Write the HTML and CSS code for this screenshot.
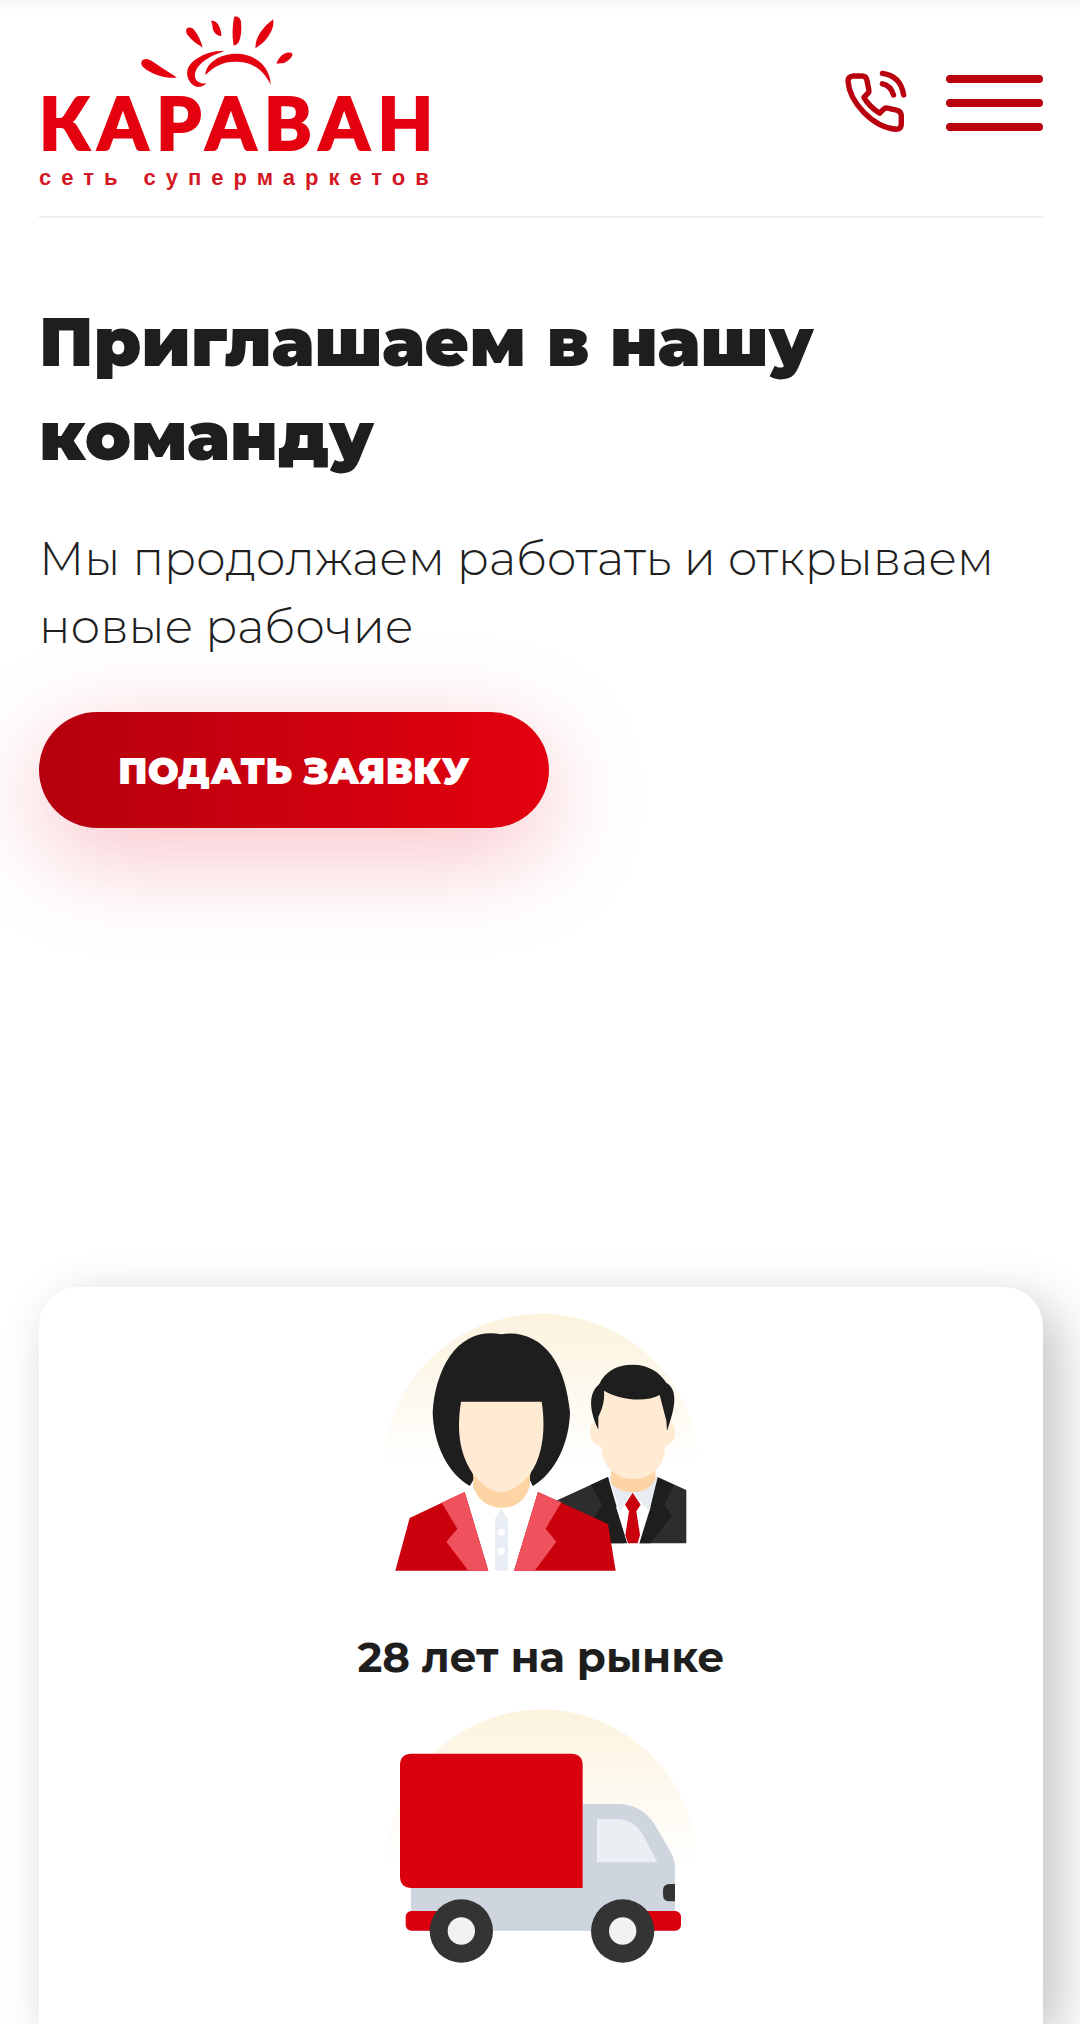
FILE: index.html
```html
<!DOCTYPE html>
<html lang="ru">
<head>
<meta charset="utf-8">
<meta name="viewport" content="width=device-width, initial-scale=1">
<title>Караван — сеть супермаркетов</title>
<link rel="stylesheet" href="styles.css">
</head>
<body>
<header class="header">
  <a class="logo" href="#" aria-label="Караван, сеть супермаркетов">
    <svg class="logo-sun" viewBox="350 35 480 235" aria-hidden="true">
      <path d="M362 187C366 173 383 175 396 184L425 204C440 215 458 223 469 233C447 234 422 231 398 220C379 211 359 199 362 187Z"/>
      <path d="M497 92C496 80 513 79 520 88C533 103 542 124 547 142C532 133 513 120 505 108C500 102 497 98 497 92Z"/>
      <path d="M572 62C580 60 591 67 595 75C600 86 604 98 603 107C593 108 583 100 579 91C575 82 578 72 572 62Z"/>
      <path d="M642 49C651 46 660 52 662 63C665 85 662 113 656 125C652 132 646 136 640 136C635 106 636 75 642 49Z"/>
      <path d="M759 57C763 78 753 98 740 115C729 129 716 137 706 144C705 121 716 101 731 83C740 72 750 65 759 57Z"/>
      <path d="M769 191C775 175 785 162 800 158C811 155 820 158 817 166C813 176 802 183 795 187C786 191 777 188 769 191Z"/>
      <path d="M612 153C575 148 526 169 507 196C493 216 501 245 521 257C535 265 552 259 557 250C545 252 529 246 525 235C515 202 560 168 612 153Z"/>
      <path d="M555 225C556 189 598 161 648 161C709 161 750 203 752 254C730 211 700 187 652 185C610 183 584 197 555 225Z"/>
    </svg>
    <span class="logo-name">КАРАВАН</span>
    <span class="logo-tagline">сеть супермаркетов</span>
  </a>
  <div class="actions">
    <a class="phone" href="tel:" aria-label="Позвонить">
      <svg viewBox="76 60 184 184" aria-hidden="true">
        <path d="M99 78H127Q138 78 141 90L147 120Q148 125 144 129L132 141Q149 170 179 188L190 177Q195 172 202 173L229 179Q242 182 243 194V222Q242 236 228 236C158 230 89 155 85 93Q85 79 99 78Z"/>
        <path d="M187 101Q212 106 220 134M187 70Q241 77 250 134"/>
      </svg>
    </a>
    <button class="menu" type="button" aria-label="Меню"><span></span><span></span><span></span></button>
  </div>
</header>
<main class="main">
  <section class="hero">
    <h1 class="title">Приглашаем в нашу команду</h1>
    <p class="lead">Мы продолжаем работать и открываем новые рабочие</p>
    <button class="apply" type="button">ПОДАТЬ ЗАЯВКУ</button>
  </section>
  <section class="card">
    <article class="fact">
      <svg class="picture" viewBox="-12 0 1050 900" aria-hidden="true">
        <defs><linearGradient id="glow" x1="0" y1="0" x2="0" y2="1"><stop offset="0" stop-color="#fcf3de"/><stop offset="1" stop-color="#fff"/></linearGradient></defs>
        <path fill="url(#glow)" d="M42 531A471 459 0 0 1 985 531Z"/>
        <path fill="#2d2d2d" d="M550 636L714 561L760 760H700ZM862 561L949 600V760H808Z"/>
        <path fill="#1e1e1e" d="M663 584L714 561L772 760H715L673 680L697 646ZM862 561L912 585L883 646L906 678L841 760H808Z"/>
        <path fill="#fff" d="M738 650H842L808 760H772Z"/>
        <path fill="#e8edf3" d="M716 560L724 556H855L863 562L838 664L788 608L750 665Z"/>
        <path fill="#fdd5a5" d="M723 530H856V568Q837 607 788 607Q742 605 723 579Z"/>
        <path fill="#ffead3" d="M684 392C650 394 653 459 687 466L695 473C698 532 738 567 791 567C843 567 884 529 885 473L889 466C921 461 928 402 891 392L872 300H702Z"/>
        <path fill="#1e1e1e" d="M685 419C664 375 648 316 688 282C706 244 739 224 788 224C835 224 868 246 889 278C931 303 909 370 891 423L889 392L869 315C827 338 749 330 702 302C705 337 694 361 685 381Z"/>
        <path fill="#ca000d" d="M788 608L812 644L799 664L810 735L803 760H774L766 735L777 664L765 644Z"/>
        <path fill="#1e1e1e" d="M393 133C335 122 280 142 240 198C208 243 191 310 188 367C190 460 233 552 300 588L312 570L300 500V345H490V500L478 570L488 589C555 550 598 460 600 367C593 303 579 244 546 198C508 144 450 122 393 133Z"/>
        <path fill="#fff" d="M284 606L300 588L311 568H479L488 589L504 606L432 842H355Z"/>
        <path fill="#fdd5a5" d="M310 540H480V585Q463 652 394 654Q331 650 310 592Z"/>
        <path fill="#ffead3" d="M273 335H515C526 403 523 492 480 551C460 577 425 606 394 606C361 606 329 578 309 552C264 488 261 411 273 335Z"/>
        <path fill="#ca000d" d="M119 684L284 606L355 842H76ZM504 606L714 702L737 842H432Z"/>
        <path fill="#ef515d" d="M215 638L284 606L355 842H295L229 755L262 716ZM504 606L574 637L527 716L559 755L494 842H432Z"/>
        <path fill="#e8edf3" d="M394 656L414 687V842H375V687Z"/>
        <circle cx="394" cy="727" r="11" fill="#fff"/><circle cx="394" cy="784" r="11" fill="#fff"/>
      </svg>
      <h2 class="fact-title">28 лет на рынке</h2>
    </article>
    <article class="fact">
      <svg class="picture" viewBox="-12 0 1050 900" aria-hidden="true">
        <path fill="url(#glow)" d="M48 530A466 471 0 0 1 981 530Z"/>
        <path fill="#ced5df" d="M123 580H638V342H743Q816 342 857 408L902 486Q915 509 915 535V722H123Z"/>
        <path fill="#eaeff4" d="M681 388H746Q795 390 821 438L862 517H681Z"/>
        <path fill="#da000e" d="M125 191H603Q638 191 638 226V594H125Q90 594 90 559V226Q90 191 125 191Z"/>
        <rect x="107" y="663" width="120" height="59" rx="17" fill="#da000e"/>
        <rect x="812" y="663" width="121" height="59" rx="17" fill="#da000e"/>
        <path fill="#343434" d="M915 582H899Q879 582 879 602V614Q879 634 899 634H915Z"/>
        <circle cx="274" cy="723" r="95" fill="#343434"/><circle cx="274" cy="723" r="41" fill="#f2f2f2"/>
        <circle cx="758" cy="723" r="95" fill="#343434"/><circle cx="758" cy="723" r="41" fill="#f2f2f2"/>
      </svg>
    </article>
  </section>
</main>
</body>
</html>
```

FILE: styles.css
```css
* {
  box-sizing: border-box;
}

body {
  display: flex;
  flex-direction: column;
  min-height: 100vh;
  margin: 0;
  padding: 0 37px 0 39px;
  background: linear-gradient(#f4f4f4, #fff 10px) no-repeat;
  color: #1e1e1e;
  font-family: Montserrat, Inter, sans-serif;
}

h1,
h2,
p {
  margin: 0;
}

button {
  border: 0;
  font-family: inherit;
  cursor: pointer;
}

.header {
  display: flex;
  justify-content: space-between;
  align-items: flex-start;
  height: 218px;
  padding-top: 12px;
  border-bottom: 2px solid #ededed;
}

.logo {
  display: flex;
  flex-direction: column;
  color: #e4000f;
  text-decoration: none;
  white-space: nowrap;
}

.logo-sun {
  width: 160px;
  height: 78px;
  margin-left: 98px;
  fill: #e4000f;
}

.logo-name {
  font: 900 72px/64px Lato, sans-serif;
  letter-spacing: 8px;
  -webkit-text-stroke: 2px #e4000f;
}

.logo-tagline {
  margin-top: 10px;
  color: #d31824;
  font: 700 22px/28px "Liberation Sans", sans-serif;
  letter-spacing: 10px;
}

.actions {
  display: flex;
  align-items: center;
  gap: 39px;
  margin-top: 58px;
}

.phone,
.phone svg {
  display: block;
  width: 62px;
  height: 62px;
}

.phone svg {
  fill: none;
  stroke: #b8000e;
  stroke-width: 16px;
  stroke-linecap: round;
  stroke-linejoin: round;
}

.menu {
  display: flex;
  flex-direction: column;
  gap: 16px;
  width: 97px;
  padding: 3px 0 0;
  background: none;
}

.menu span {
  height: 8px;
  border-radius: 4px;
  background: #b8000e;
}

.main {
  display: flex;
  flex: 1;
  flex-direction: column;
}

.hero {
  padding: 77px 0 459px;
}

.title {
  font-size: 68px;
  font-weight: 900;
  line-height: 94px;
}

.lead {
  margin-top: 42px;
  font-size: 47px;
  font-weight: 300;
  line-height: 68px;
}

.apply {
  display: block;
  height: 116px;
  margin-top: 51px;
  padding: 0 79px;
  border-radius: 58px;
  background: linear-gradient(90deg, #b5000e, #e4000f);
  box-shadow: 0 26px 100px rgba(228, 0, 31, 0.25);
  color: #fff;
  font-size: 37px;
  font-weight: 900;
}

.card {
  flex: 1;
  padding-top: 3px;
  border-radius: 39px 39px 0 0;
  background: #fff;
  box-shadow: 16px 16px 52px rgba(0, 0, 0, 0.24);
}

.fact {
  display: flex;
  flex-direction: column;
  align-items: center;
}

.picture {
  width: 350px;
  height: 300px;
}

.fact-title {
  padding: 37px 0 3px;
  font-size: 42px;
  font-weight: 700;
  line-height: 60px;
}
```
